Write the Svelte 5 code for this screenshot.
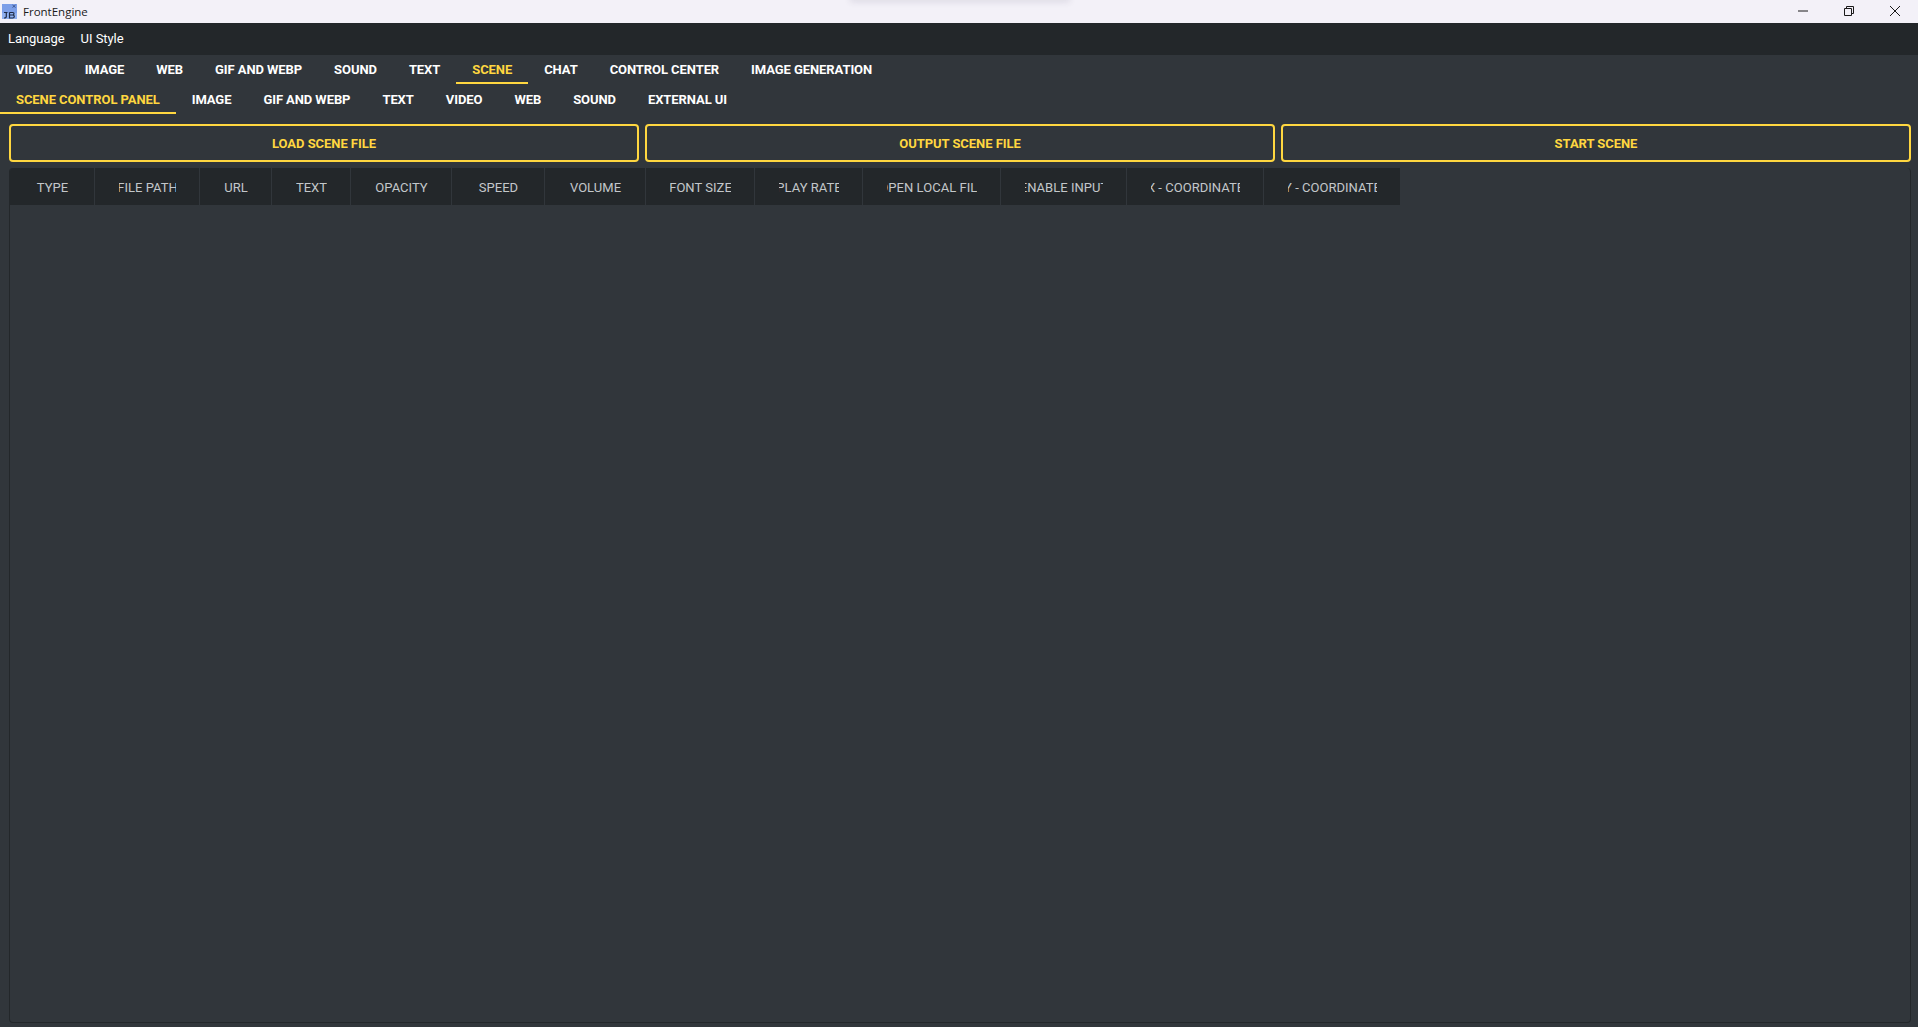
<script lang="ts">
  const mainTabs = ['VIDEO', 'IMAGE', 'WEB', 'GIF AND WEBP', 'SOUND', 'TEXT', 'SCENE', 'CHAT', 'CONTROL CENTER', 'IMAGE GENERATION'];
  const subTabs = ['SCENE CONTROL PANEL', 'IMAGE', 'GIF AND WEBP', 'TEXT', 'VIDEO', 'WEB', 'SOUND', 'EXTERNAL UI'];
  const actions = ['LOAD SCENE FILE', 'OUTPUT SCENE FILE', 'START SCENE'];
  const columns = [
    { label: 'TYPE', width: 85 },
    { label: 'FILE PATH', width: 105 },
    { label: 'URL', width: 72 },
    { label: 'TEXT', width: 79 },
    { label: 'OPACITY', width: 101 },
    { label: 'SPEED', width: 93 },
    { label: 'VOLUME', width: 101 },
    { label: 'FONT SIZE', width: 109 },
    { label: 'PLAY RATE', width: 108 },
    { label: 'OPEN LOCAL FILE', width: 138 },
    { label: 'ENABLE INPUT', width: 126 },
    { label: 'X - COORDINATE', width: 137 },
    { label: 'Y - COORDINATE', width: 136 }
  ];
</script>

<div class="window">
  <div class="titlebar">
    <svg class="app-icon" viewBox="0 0 16 16" width="16" height="16">
      <rect x="1" y="0" width="15" height="15" fill="#7d9fe8" />
      <rect x="1" y="9" width="15" height="6" fill="#8fb0f0" />
      <path d="M11.5 1l3 2.5M14.5 1l-3 2.5" stroke="#3d5590" stroke-width="1" />
      <path d="M3 8.5h3.5M5.3 8.5v4q0 1.5-2.3 1.5M8.5 8.5h3.2q1.3 0 1.3 1.2t-1.3 1.3h-3.2M11.7 11q1.6 0 1.6 1.5T11.7 14H8.5V8.5" fill="none" stroke="#1f2a44" stroke-width="1.2" />
    </svg>
    <span class="app-title">FrontEngine</span>
    <div class="shadow"></div>
    <div class="win-controls">
      <svg viewBox="0 0 12 12" width="12" height="12"><path d="M1 6h10" stroke="#1a1a1a" fill="none" /></svg>
      <svg viewBox="0 0 12 12" width="12" height="12"><path d="M1.5 3.5h7v7h-7zM3.5 3.5v-2h7v7h-2" stroke="#1a1a1a" fill="none" /></svg>
      <svg viewBox="0 0 12 12" width="12" height="12"><path d="M1 1l10 10M11 1L1 11" stroke="#1a1a1a" fill="none" /></svg>
    </div>
  </div>

  <div class="menubar">
    <span>Language</span>
    <span>UI Style</span>
  </div>

  <div class="tabs">
    {#each mainTabs as tab (tab)}
      <div class="tab" class:active={tab === 'SCENE'}>{tab}</div>
    {/each}
  </div>
  <div class="tabs">
    {#each subTabs as tab (tab)}
      <div class="tab" class:active={tab === 'SCENE CONTROL PANEL'}>{tab}</div>
    {/each}
  </div>

  <div class="content">
    <div class="actions">
      {#each actions as action (action)}
        <div class="action">{action}</div>
      {/each}
    </div>
    <div class="table">
      <div class="table-head">
        {#each columns as col (col.label)}
          <div class="th" style="width: {col.width}px"><span>{col.label}</span></div>
        {/each}
      </div>
    </div>
  </div>
</div>

<style>
  :global(body) {
    margin: 0;
    background: #31363b;
  }
  .window {
    display: flex;
    flex-direction: column;
    height: 1027px;
    overflow: hidden;
    font-family: Roboto, 'Noto Sans', sans-serif;
    background: #31363b;
  }
  .titlebar {
    position: relative;
    display: flex;
    align-items: center;
    flex: 0 0 23px;
    background: #f3f1f8;
  }
  .app-icon {
    margin-left: 1px;
  }
  .app-title {
    margin-left: 6px;
    font-family: 'Open Sans', 'Noto Sans', sans-serif;
    font-size: 11.5px;
    color: #1a1a1a;
  }
  .shadow {
    position: absolute;
    left: 850px;
    top: -6px;
    width: 220px;
    height: 6px;
    box-shadow: 0 2px 6px rgba(60, 50, 80, 0.12);
  }
  .win-controls {
    margin-left: auto;
    display: flex;
    gap: 34px;
    padding: 0 17px 2px 0;
  }
  .win-controls svg {
    display: block;
  }
  .menubar {
    display: flex;
    align-items: center;
    flex: 0 0 32px;
    gap: 16px;
    padding: 0 0 2px 8px;
    box-sizing: border-box;
    background: #23272a;
    color: #ffffff;
    font-size: 13px;
    letter-spacing: -0.05px;
  }
  .tabs {
    display: flex;
    flex: 0 0 30px;
    background: #31363b;
  }
  .tab {
    display: flex;
    align-items: center;
    height: 29px;
    padding: 2px 16px 0;
    box-sizing: border-box;
    font-size: 13px;
    font-weight: 700;
    letter-spacing: -0.08px;
    color: #ffffff;
    border-bottom: 2px solid transparent;
    white-space: nowrap;
  }
  .tab.active {
    color: #ffd740;
    border-bottom-color: #ffd740;
  }
  .content {
    flex: 1;
    min-height: 0;
    display: flex;
    flex-direction: column;
    gap: 6px;
    padding: 9px 7px 4px 9px;
  }
  .actions {
    display: grid;
    grid-template-columns: repeat(3, 1fr);
    gap: 6px;
    flex: 0 0 38px;
  }
  .action {
    display: flex;
    align-items: center;
    justify-content: center;
    border: 2px solid #ffd740;
    border-radius: 4px;
    font-size: 13px;
    font-weight: 700;
    letter-spacing: -0.05px;
    color: #ffd740;
  }
  .table {
    flex: 1;
    min-height: 0;
    border: 1px solid #23272a;
    border-top: 0;
    border-radius: 4px;
    overflow: hidden;
  }
  .table-head {
    display: flex;
    width: max-content;
    height: 37px;
    background: #23272a;
  }
  .th {
    display: flex;
    align-items: center;
    box-sizing: border-box;
    padding: 2px 23px 0 24px;
    border-right: 1px solid #31363b;
  }
  .th:last-child {
    border-right: 0;
  }
  .th span {
    flex: 1;
    display: flex;
    justify-content: center;
    overflow: hidden;
    white-space: nowrap;
    font-size: 13px;
    letter-spacing: 0.03px;
    color: #c3c7ca;
  }
</style>
